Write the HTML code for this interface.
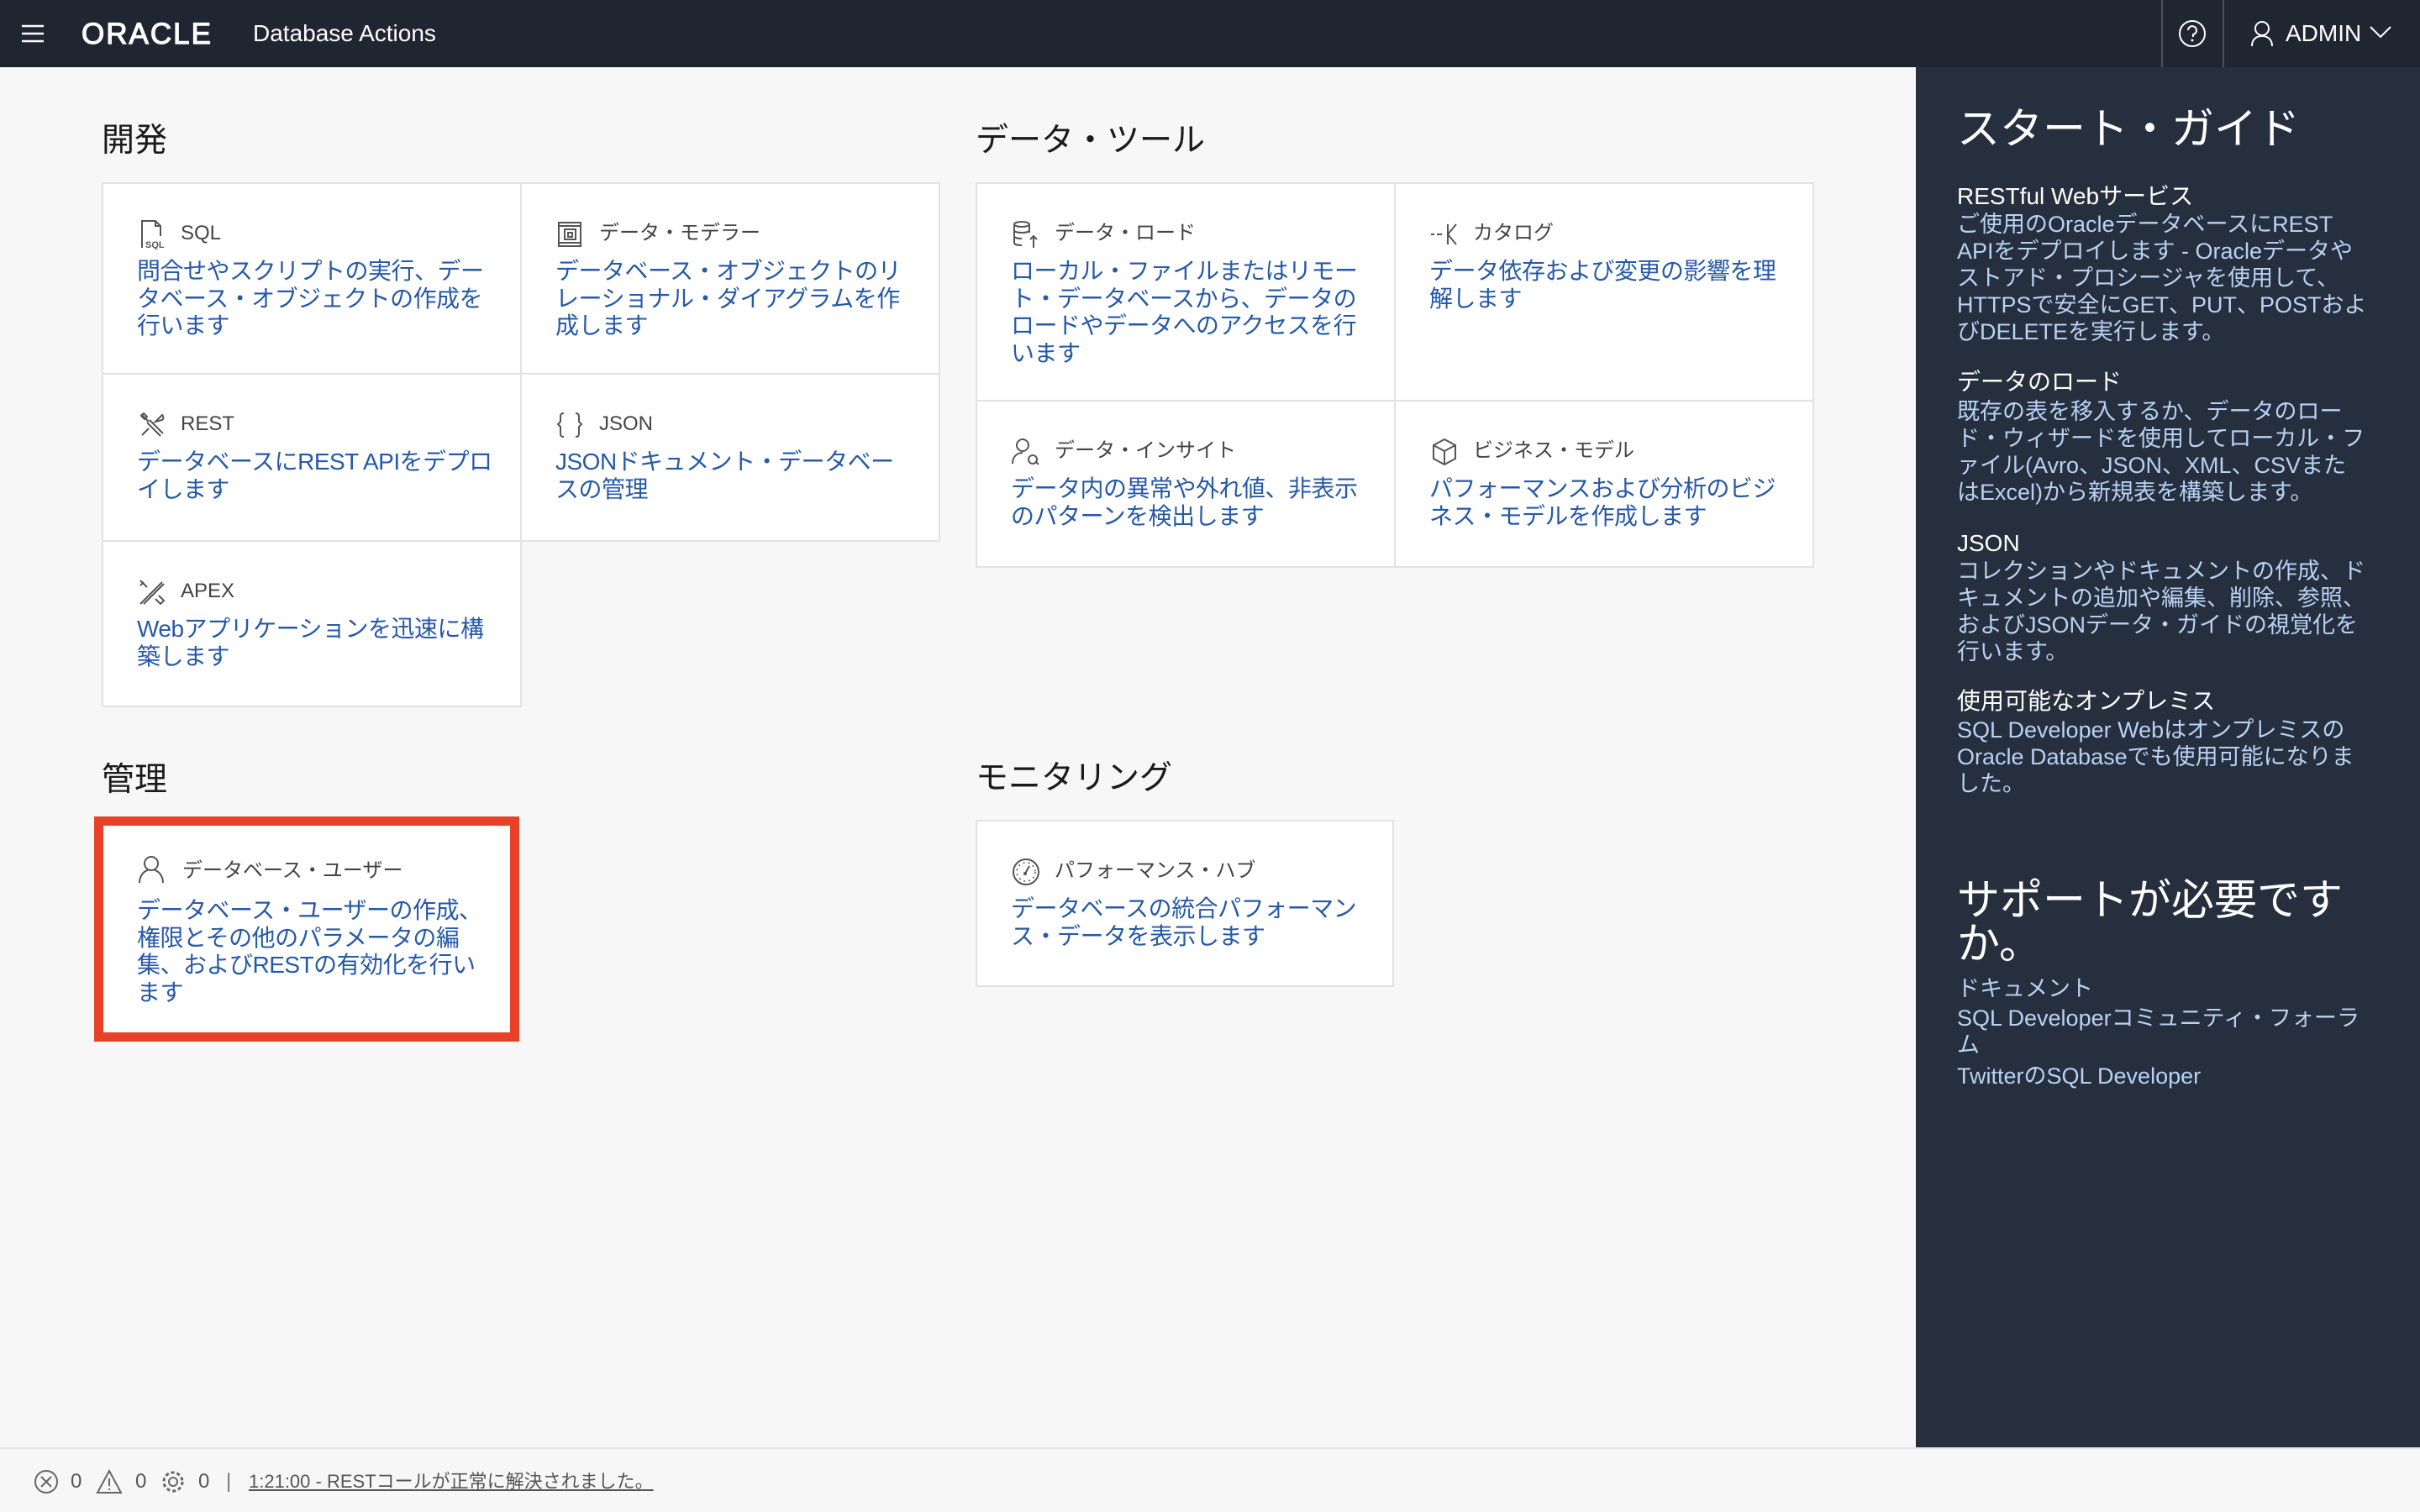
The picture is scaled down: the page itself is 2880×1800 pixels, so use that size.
<!DOCTYPE html>
<html><head><meta charset="utf-8">
<style>
*{margin:0;padding:0;box-sizing:border-box}
html,body{width:2880px;height:1800px;overflow:hidden}
body{background:#f7f7f7;font-family:"Liberation Sans","Noto Sans CJK JP",sans-serif;position:relative}
.hdr{position:absolute;left:0;top:0;width:2880px;height:80px;background:#1f2632}
.abs{position:absolute;white-space:nowrap}
.h2{font-size:39px;color:#1a1a1a;line-height:48px}
.card{position:absolute;background:#fff;border:2px solid #e2e2e2}
.card .ic{position:absolute;left:40px;top:42px;width:36px;height:36px}
.card .t{position:absolute;left:92px;top:43px;font-size:24px;line-height:32px;color:#444;white-space:nowrap}
.card .d{position:absolute;left:40px;top:88px;font-size:28px;line-height:32.5px;color:#2659a8;white-space:nowrap;letter-spacing:-0.5px}
.side{position:absolute;left:2280px;top:80px;width:600px;height:1644px;background:#262f3e}
.st{position:absolute;left:49px;color:#fff;font-size:28px;line-height:32px;white-space:nowrap}
.sb{position:absolute;left:49px;color:#b8d2f3;font-size:27px;line-height:32px;white-space:nowrap}
.sh{position:absolute;left:49px;color:#fff;font-size:51px;line-height:52px;white-space:nowrap}
svg{display:block}
</style></head><body>
<div class="hdr">
 <svg class="abs" style="left:26px;top:29px" width="26" height="22"><path d="M0 2H26M0 11H26M0 20H26" stroke="#fff" stroke-width="2.5"/></svg>
 <div class="abs" style="left:97px;top:21px;font-size:35px;line-height:40px;color:#fff;font-weight:normal;letter-spacing:2px;-webkit-text-stroke:1.2px #fff">ORACLE</div>
 <div class="abs" style="left:301px;top:24px;font-size:28px;line-height:32px;color:#fff">Database Actions</div>
 <div class="abs" style="left:2572px;top:0;width:2px;height:80px;background:#4a5260"></div>
 <div class="abs" style="left:2645px;top:0;width:2px;height:80px;background:#4a5260"></div>
 <svg class="abs" style="left:2592px;top:23px" width="34" height="34"><circle cx="17" cy="17" r="15" fill="none" stroke="#fff" stroke-width="2"/><path d="M12 13a5 5 0 1 1 6 5v3" fill="none" stroke="#fff" stroke-width="2"/><circle cx="17" cy="25" r="1.5" fill="#fff"/></svg>
 <svg class="abs" style="left:2678px;top:24px" width="28" height="32"><circle cx="14" cy="10" r="8" fill="none" stroke="#fff" stroke-width="2"/><path d="M2 31c0-8 5-12 12-12s12 4 12 12" fill="none" stroke="#fff" stroke-width="2"/></svg>
 <div class="abs" style="left:2720px;top:24px;font-size:28px;line-height:32px;color:#fff">ADMIN</div>
 <svg class="abs" style="left:2820px;top:30px" width="26" height="16"><path d="M1 2L13 14L25 2" fill="none" stroke="#fff" stroke-width="2"/></svg>
</div>

<div class="abs h2" style="left:121px;top:144px">開発</div>
<div class="abs h2" style="left:1161px;top:144px">データ・ツール</div>
<div class="abs h2" style="left:121px;top:905px">管理</div>
<div class="abs h2" style="left:1161px;top:903px">モニタリング</div>

<div class="card" style="left:121px;top:217px;width:500px;height:229px">
 <svg class="ic" viewBox="0 0 36 36"><path d="M6 34V2h16l6 6v12M22 2v6h6" fill="none" stroke="#555" stroke-width="2"/><text x="10" y="34" font-size="11" font-family="Liberation Sans" fill="#555" font-weight="bold">SQL</text></svg>
 <div class="t">SQL</div>
 <div class="d">問合せやスクリプトの実行、デー<br>タベース・オブジェクトの作成を<br>行います</div>
</div>
<div class="card" style="left:619px;top:217px;width:500px;height:229px">
 <svg class="ic" viewBox="0 0 36 36"><path d="M4 4H30V32H4ZM4 8H30M4 28H30M11 12H24V24H11ZM15 16H20V21H15Z" fill="none" stroke="#555" stroke-width="2"/></svg>
 <div class="t">データ・モデラー</div>
 <div class="d">データベース・オブジェクトのリ<br>レーショナル・ダイアグラムを作<br>成します</div>
</div>
<div class="card" style="left:121px;top:444px;width:500px;height:201px">
 <svg class="ic" viewBox="0 0 36 36"><path d="M5 5l9 9M8 4l-3 3 4 4 3-3zM28 31l-16-16M31 28l-16-16M22 14l8-8a4 4 0 0 1 0 6zM14 22l-8 8" fill="none" stroke="#555" stroke-width="2"/></svg>
 <div class="t">REST</div>
 <div class="d">データベースにREST APIをデプロ<br>イします</div>
</div>
<div class="card" style="left:619px;top:444px;width:500px;height:201px">
 <svg class="ic" viewBox="0 0 36 36"><path d="M10 4c-4 0-4 2-4 6v4l-3 3 3 3v6c0 4 0 6 4 6M24 4c4 0 4 2 4 6v4l3 3-3 3v6c0 4 0 6-4 6" fill="none" stroke="#555" stroke-width="2"/></svg>
 <div class="t">JSON</div>
 <div class="d">JSONドキュメント・データベー<br>スの管理</div>
</div>
<div class="card" style="left:121px;top:643px;width:500px;height:199px">
 <svg class="ic" viewBox="0 0 36 36"><path d="M4 32L30 6M8 32L32 8M4 4l8 8M4 10l4-4M22 26l6 6 4-4-6-6" fill="none" stroke="#555" stroke-width="2"/></svg>
 <div class="t">APEX</div>
 <div class="d">Webアプリケーションを迅速に構<br>築します</div>
</div>

<div class="card" style="left:1161px;top:217px;width:500px;height:261px">
 <svg class="ic" viewBox="0 0 36 36"><ellipse cx="13" cy="6" rx="9" ry="3" fill="none" stroke="#555" stroke-width="2"/><path d="M4 6v22c0 2 4 3 9 3M22 6v10M4 13c0 2 4 3 9 3s9-1 9-3M4 20c0 2 4 3 9 3M27 34V20M23 24l4-4 4 4" fill="none" stroke="#555" stroke-width="2"/></svg>
 <div class="t">データ・ロード</div>
 <div class="d">ローカル・ファイルまたはリモー<br>ト・データベースから、データの<br>ロードやデータへのアクセスを行<br>います</div>
</div>
<div class="card" style="left:1659px;top:217px;width:500px;height:261px">
 <svg class="ic" viewBox="0 0 36 36"><path d="M2 18h4M9 18h6M22 6v24M32 6L22 18l10 12" fill="none" stroke="#555" stroke-width="2"/></svg>
 <div class="t">カタログ</div>
 <div class="d">データ依存および変更の影響を理<br>解します</div>
</div>
<div class="card" style="left:1161px;top:476px;width:500px;height:200px">
 <svg class="ic" viewBox="0 0 36 36"><circle cx="14" cy="10" r="7" fill="none" stroke="#555" stroke-width="2"/><path d="M2 32c0-8 5-13 12-13M26 22a5 5 0 1 0 .1 0M29 29l4 4" fill="none" stroke="#555" stroke-width="2"/></svg>
 <div class="t">データ・インサイト</div>
 <div class="d">データ内の異常や外れ値、非表示<br>のパターンを検出します</div>
</div>
<div class="card" style="left:1659px;top:476px;width:500px;height:200px">
 <svg class="ic" viewBox="0 0 36 36"><path d="M18 3L31 10V26L18 33L5 26V10ZM5 10L18 17L31 10M18 17V33" fill="none" stroke="#555" stroke-width="2"/></svg>
 <div class="t">ビジネス・モデル</div>
 <div class="d">パフォーマンスおよび分析のビジ<br>ネス・モデルを作成します</div>
</div>

<div class="abs" style="left:112px;top:972px;width:506px;height:268px;border:11px solid #e8412a;background:#fff">
 <svg class="abs" style="left:40px;top:34px" width="36" height="36" viewBox="0 0 36 36"><circle cx="17" cy="11" r="8" fill="none" stroke="#555" stroke-width="2"/><path d="M3 34c0-8 5-14 10-15M31 34c0-8-5-14-10-15" fill="none" stroke="#555" stroke-width="2"/></svg>
 <div class="abs" style="left:94px;top:38px;font-size:24px;line-height:32px;color:#444">データベース・ユーザー</div>
 <div class="abs" style="left:40px;top:85px;font-size:28px;line-height:32.5px;color:#2659a8;letter-spacing:-0.5px">データベース・ユーザーの作成、<br>権限とその他のパラメータの編<br>集、およびRESTの有効化を行い<br>ます</div>
</div>

<div class="card" style="left:1161px;top:976px;width:498px;height:199px">
 <svg class="ic" viewBox="0 0 36 36"><circle cx="18" cy="18" r="15" fill="none" stroke="#555" stroke-width="2"/><circle cx="18" cy="18" r="11" fill="none" stroke="#555" stroke-width="1.5" stroke-dasharray="2 4"/><path d="M17 20l5-9" stroke="#555" stroke-width="2"/><circle cx="17" cy="20" r="2" fill="#555"/></svg>
 <div class="t">パフォーマンス・ハブ</div>
 <div class="d">データベースの統合パフォーマン<br>ス・データを表示します</div>
</div>

<div class="side">
 <div class="sh" style="top:48px">スタート・ガイド</div>
 <div class="st" style="top:138px">RESTful Webサービス</div>
 <div class="sb" style="top:171px">ご使用のOracleデータベースにREST<br>APIをデプロイします - Oracleデータや<br>ストアド・プロシージャを使用して、<br>HTTPSで安全にGET、PUT、POSTおよ<br>びDELETEを実行します。</div>
 <div class="st" style="top:359px">データのロード</div>
 <div class="sb" style="top:394px">既存の表を移入するか、データのロー<br>ド・ウィザードを使用してローカル・フ<br>ァイル(Avro、JSON、XML、CSVまた<br>はExcel)から新規表を構築します。</div>
 <div class="st" style="top:551px">JSON</div>
 <div class="sb" style="top:584px">コレクションやドキュメントの作成、ド<br>キュメントの追加や編集、削除、参照、<br>およびJSONデータ・ガイドの視覚化を<br>行います。</div>
 <div class="st" style="top:739px">使用可能なオンプレミス</div>
 <div class="sb" style="top:773px">SQL Developer Webはオンプレミスの<br>Oracle Databaseでも使用可能になりま<br>した。</div>
 <div class="sh" style="top:966px">サポートが必要です<br>か。</div>
 <div class="sb" style="top:1081px">ドキュメント</div>
 <div class="sb" style="top:1116px">SQL Developerコミュニティ・フォーラ<br>ム</div>
 <div class="sb" style="top:1185px">TwitterのSQL Developer</div>
</div>

<div class="abs" style="left:0;top:1723px;width:2880px;height:2px;background:#e4e4e4"></div>
<svg class="abs" style="left:40px;top:1748px" width="220" height="32">
 <circle cx="15" cy="16" r="13" fill="none" stroke="#666" stroke-width="2"/><path d="M9 10l12 12M21 10L9 22" stroke="#666" stroke-width="2"/>
 <path d="M90 3L104 29H76Z" fill="none" stroke="#666" stroke-width="2"/><path d="M90 12v9M90 24v2" stroke="#666" stroke-width="2"/>
 <circle cx="166" cy="16" r="5" fill="none" stroke="#666" stroke-width="2"/><circle cx="166" cy="16" r="11" fill="none" stroke="#666" stroke-width="3" stroke-dasharray="4 3"/>
</svg>
<div class="abs" style="left:84px;top:1750px;font-size:24px;line-height:28px;color:#555">0</div>
<div class="abs" style="left:161px;top:1750px;font-size:24px;line-height:28px;color:#555">0</div>
<div class="abs" style="left:236px;top:1750px;font-size:24px;line-height:28px;color:#555">0</div>
<div class="abs" style="left:269px;top:1750px;font-size:24px;line-height:28px;color:#777">|</div>
<div class="abs" style="left:296px;top:1750px;font-size:22px;line-height:28px;color:#555;text-decoration:underline">1:21:00 - RESTコールが正常に解決されました。</div>
</body></html>
